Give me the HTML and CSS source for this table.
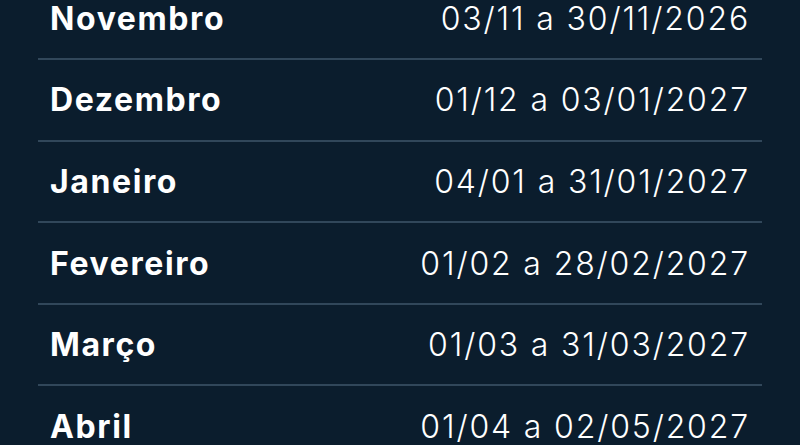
FILE: index.html
```html
<!DOCTYPE html>
<html lang="pt">
<head>
    <meta charset="UTF-8">
    <meta name="viewport" content="width=device-width, initial-scale=1.0">
    <title>Calendário</title>
    <link rel="stylesheet" href="styles.css">
</head>
<body>
    <div class="calendar">
        <div class="row"><span class="month">Novembro</span><span class="period">03/11 a 30/11/2026</span></div>
        <div class="row"><span class="month">Dezembro</span><span class="period">01/12 a 03/01/2027</span></div>
        <div class="row"><span class="month">Janeiro</span><span class="period">04/01 a 31/01/2027</span></div>
        <div class="row"><span class="month">Fevereiro</span><span class="period">01/02 a 28/02/2027</span></div>
        <div class="row"><span class="month">Março</span><span class="period">01/03 a 31/03/2027</span></div>
        <div class="row"><span class="month">Abril</span><span class="period">01/04 a 02/05/2027</span></div>
    </div>
</body>
</html>
```

FILE: styles.css
```css
body {
    margin: 0;
    background-color: #0b1d2d;
    font-family: Inter, "Open Sans", sans-serif;
    color: #ffffff;
    height: 445px;
    overflow: hidden;
}
.calendar {
    margin: -21.5px 38px 0 38px;
}
.row {
    display: flex;
    justify-content: space-between;
    align-items: center;
    height: 79.6px;
    padding: 0 12px 0 12px;
    border-bottom: 2px solid #31475a;
}
.month {
    font-weight: 700;
    font-size: 32px;
    letter-spacing: 1.6px;
}
.period {
    font-weight: 300;
    font-size: 32px;
    letter-spacing: 1.85px;
}
```
